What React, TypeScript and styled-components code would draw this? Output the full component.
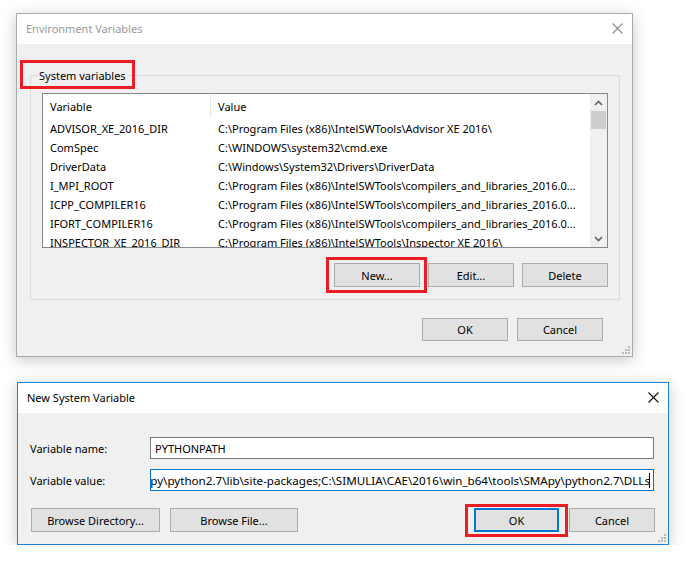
import styled, { createGlobalStyle } from 'styled-components';

const GlobalStyle = createGlobalStyle`
  html, body {
    margin: 0;
    padding: 0;
    background: #fff;
  }
  body {
    font-family: 'Segoe UI', 'Noto Sans', sans-serif;
    font-size: 11px;
    color: #000;
  }
  * {
    box-sizing: border-box;
  }
`;

const variables = [
  ['ADVISOR_XE_2016_DIR', 'C:\\Program Files (x86)\\IntelSWTools\\Advisor XE 2016\\'],
  ['ComSpec', 'C:\\WINDOWS\\system32\\cmd.exe'],
  ['DriverData', 'C:\\Windows\\System32\\Drivers\\DriverData'],
  ['I_MPI_ROOT', 'C:\\Program Files (x86)\\IntelSWTools\\compilers_and_libraries_2016.0...'],
  ['ICPP_COMPILER16', 'C:\\Program Files (x86)\\IntelSWTools\\compilers_and_libraries_2016.0...'],
  ['IFORT_COMPILER16', 'C:\\Program Files (x86)\\IntelSWTools\\compilers_and_libraries_2016.0...'],
  ['INSPECTOR_XE_2016_DIR', 'C:\\Program Files (x86)\\IntelSWTools\\Inspector XE 2016\\'],
];

const pythonPath =
  'C:\\SIMULIA\\CAE\\2016\\win_b64\\tools\\SMApy\\python2.7\\lib\\site-packages;C:\\SIMULIA\\CAE\\2016\\win_b64\\tools\\SMApy\\python2.7\\DLLs';

function CloseIcon({ color }: { color: string }) {
  return (
    <svg width="11" height="11" viewBox="0 0 11 11">
      <path d="M0.5 0.5 L10.5 10.5 M10.5 0.5 L0.5 10.5" stroke={color} strokeWidth="1.1" fill="none" />
    </svg>
  );
}

function Chevron({ up }: { up?: boolean }) {
  return (
    <svg width="9" height="6" viewBox="0 0 9 6">
      <path
        d={up ? 'M1 5 L4.5 1.5 L8 5' : 'M1 1 L4.5 4.5 L8 1'}
        stroke="#606060"
        strokeWidth="1.6"
        fill="none"
      />
    </svg>
  );
}

function GripIcon() {
  return (
    <Grip width="8" height="8" viewBox="0 0 8 8">
      <rect x="6" y="0" width="2" height="2" fill="#b9b9b9" />
      <rect x="3" y="3" width="2" height="2" fill="#b9b9b9" />
      <rect x="6" y="3" width="2" height="2" fill="#b9b9b9" />
      <rect x="0" y="6" width="2" height="2" fill="#b9b9b9" />
      <rect x="3" y="6" width="2" height="2" fill="#b9b9b9" />
      <rect x="6" y="6" width="2" height="2" fill="#b9b9b9" />
    </Grip>
  );
}

export default function App() {
  return (
    <>
      <GlobalStyle />
      <Page>
        {/* Environment Variables (inactive) */}
        <Window $width={617} $height={344} $border="#aaaaaa" $offset={0}>
          <TitleBar $color="#999999">
            <span>Environment Variables</span>
            <CloseIcon color="#8a8a8a" />
          </TitleBar>
          <EnvBody>
            <GroupBox>
              <GroupLabel>
                System variables
                <Callout $top={-8} $left={-18} $width={115} $height={29} />
              </GroupLabel>
              <ListBox>
                <ListContent>
                  <HeaderRow>
                    <HeaderCell $divider>Variable</HeaderCell>
                    <HeaderCell>Value</HeaderCell>
                  </HeaderRow>
                  {variables.map(([name, value]) => (
                    <Row key={name}>
                      <Cell>{name}</Cell>
                      <Cell>{value}</Cell>
                    </Row>
                  ))}
                </ListContent>
                <ScrollBar>
                  <ScrollArrow>
                    <Chevron up />
                  </ScrollArrow>
                  <ScrollThumb />
                  <ScrollTrack />
                  <ScrollArrow>
                    <Chevron />
                  </ScrollArrow>
                </ScrollBar>
              </ListBox>
              <ButtonRow $gap={8}>
                <Highlight>
                  <Button $width={86} $height={24}>New...</Button>
                  <Callout $top={-6} $left={-8} $right={-7} $bottom={-6} />
                </Highlight>
                <Button $width={86} $height={24}>Edit...</Button>
                <Button $width={86} $height={24}>Delete</Button>
              </ButtonRow>
            </GroupBox>
            <FooterRow>
              <Button $width={86} $height={23}>OK</Button>
              <Button $width={86} $height={23}>Cancel</Button>
            </FooterRow>
          </EnvBody>
          <GripIcon />
        </Window>

        {/* New System Variable (active) */}
        <Window $width={652} $height={163} $border="#1883d7" $offset={1}>
          <TitleBar $color="#000">
            <span>New System Variable</span>
            <CloseIcon color="#111" />
          </TitleBar>
          <NewBody>
            <Fields>
              <FieldRow>
                <FieldLabel>Variable name:</FieldLabel>
                <TextBox>PYTHONPATH</TextBox>
              </FieldRow>
              <FieldRow>
                <FieldLabel>Variable value:</FieldLabel>
                <TextBox $active>
                  <FieldText>{pythonPath}</FieldText>
                  <Caret />
                </TextBox>
              </FieldRow>
            </Fields>
            <DialogButtons>
              <ButtonGroup $gap={10}>
                <Button $width={129} $height={24}>Browse Directory...</Button>
                <Button $width={128} $height={24}>Browse File...</Button>
              </ButtonGroup>
              <ButtonGroup $gap={10}>
                <Highlight>
                  <Button $width={85} $height={24} $focused>OK</Button>
                  <Callout $top={-4} $left={-9} $right={-9} $bottom={-5} />
                </Highlight>
                <Button $width={86} $height={24}>Cancel</Button>
              </ButtonGroup>
            </DialogButtons>
          </NewBody>
          <GripIcon />
        </Window>
      </Page>
    </>
  );
}

const Page = styled.div`
  display: flex;
  flex-direction: column;
  align-items: flex-start;
  gap: 25px;
  padding: 13px 0 0 16px;
`;

interface WindowProps {
  $width: number;
  $height: number;
  $border: string;
  $offset: number;
}

const Window = styled.div<WindowProps>`
  position: relative;
  display: flex;
  flex-direction: column;
  width: ${({ $width }) => $width}px;
  height: ${({ $height }) => $height}px;
  margin-left: ${({ $offset }) => $offset}px;
  border: 1px solid ${({ $border }) => $border};
  background: #f0f0f0;
  box-shadow: 0 3px 14px rgba(0, 0, 0, 0.22);
`;

const TitleBar = styled.div<{ $color: string }>`
  display: flex;
  align-items: center;
  justify-content: space-between;
  height: 30px;
  flex-shrink: 0;
  padding: 0 9px 1px 9px;
  background: #fff;
  color: ${({ $color }) => $color};
`;

const EnvBody = styled.div`
  display: flex;
  flex-direction: column;
  padding: 31px 12px 0 13px;
`;

const GroupBox = styled.div`
  position: relative;
  border: 1px solid #dcdcdc;
  padding: 17px 11px 12px 11px;
`;

const GroupLabel = styled.span`
  position: absolute;
  top: -8px;
  left: 7px;
  line-height: 16px;
  padding: 0 1px;
  background: #f0f0f0;
`;

interface CalloutProps {
  $top: number;
  $left: number;
  $right?: number;
  $bottom?: number;
  $width?: number;
  $height?: number;
}

const Callout = styled.span<CalloutProps>`
  position: absolute;
  top: ${({ $top }) => $top}px;
  left: ${({ $left }) => $left}px;
  ${({ $right }) => ($right !== undefined ? `right: ${$right}px;` : '')}
  ${({ $bottom }) => ($bottom !== undefined ? `bottom: ${$bottom}px;` : '')}
  ${({ $width }) => ($width !== undefined ? `width: ${$width}px;` : '')}
  ${({ $height }) => ($height !== undefined ? `height: ${$height}px;` : '')}
  border: 3px solid #ec1c24;
  pointer-events: none;
`;

const Highlight = styled.span`
  position: relative;
  display: inline-flex;
`;

const ListBox = styled.div`
  display: flex;
  height: 155px;
  border: 1px solid #828790;
  background: #fff;
  overflow: hidden;
`;

const ListContent = styled.div`
  flex: 1;
  min-width: 0;
  overflow: hidden;
`;

const HeaderRow = styled.div`
  display: grid;
  grid-template-columns: 168px 1fr;
  height: 25px;
  align-items: stretch;
`;

const HeaderCell = styled.div<{ $divider?: boolean }>`
  display: flex;
  align-items: center;
  padding-left: 7px;
  margin: 1px 0 1px;
  border-right: ${({ $divider }) => ($divider ? '1px solid #e5e5e5' : 'none')};
`;

const Row = styled.div`
  display: grid;
  grid-template-columns: 168px 1fr;
  height: 19px;
  align-items: center;
`;

const Cell = styled.div`
  padding-left: 7px;
  white-space: nowrap;
  overflow: hidden;
`;

const ScrollBar = styled.div`
  display: flex;
  flex-direction: column;
  width: 17px;
  flex-shrink: 0;
  background: #f0f0f0;
`;

const ScrollArrow = styled.div`
  display: flex;
  align-items: center;
  justify-content: center;
  height: 17px;
`;

const ScrollThumb = styled.div`
  height: 18px;
  margin: 0 1px;
  background: #cdcdcd;
`;

const ScrollTrack = styled.div`
  flex: 1;
`;

const ButtonRow = styled.div<{ $gap: number }>`
  display: flex;
  justify-content: flex-end;
  gap: ${({ $gap }) => $gap}px;
  margin-top: 15px;
`;

const FooterRow = styled.div`
  display: flex;
  justify-content: flex-end;
  gap: 9px;
  margin-top: 18px;
  padding-right: 17px;
`;

interface ButtonProps {
  $width: number;
  $height: number;
  $focused?: boolean;
}

const Button = styled.button<ButtonProps>`
  width: ${({ $width }) => $width}px;
  height: ${({ $height }) => $height}px;
  padding: 0;
  background: #e1e1e1;
  border: ${({ $focused }) => ($focused ? '2px solid #0078d7' : '1px solid #adadad')};
  font-family: inherit;
  font-size: 11px;
  color: #000;
`;

const Grip = styled.svg`
  position: absolute;
  right: 2px;
  bottom: 2px;
`;

const NewBody = styled.div`
  display: flex;
  flex-direction: column;
  padding: 24px 14px 0 12px;
`;

const Fields = styled.div`
  display: flex;
  flex-direction: column;
  gap: 10px;
`;

const FieldRow = styled.div`
  display: flex;
  align-items: center;
`;

const FieldLabel = styled.div`
  width: 120px;
  flex-shrink: 0;
`;

const TextBox = styled.div<{ $active?: boolean }>`
  display: flex;
  align-items: center;
  justify-content: ${({ $active }) => ($active ? 'flex-end' : 'flex-start')};
  flex: 1;
  min-width: 0;
  height: 22px;
  padding: 0 3px 0 4px;
  border: 1px solid ${({ $active }) => ($active ? '#0078d7' : '#7a7a7a')};
  background: #fff;
  overflow: hidden;
  white-space: nowrap;
`;

const FieldText = styled.span`
  flex-shrink: 0;
  font-size: 11.6px;
`;

const Caret = styled.span`
  flex-shrink: 0;
  width: 1px;
  height: 15px;
  margin-left: -1px;
  background: #000;
`;

const DialogButtons = styled.div`
  display: flex;
  justify-content: space-between;
  margin: 17px -1px 0 1px;
`;

const ButtonGroup = styled.div<{ $gap: number }>`
  display: flex;
  gap: ${({ $gap }) => $gap}px;
`;
